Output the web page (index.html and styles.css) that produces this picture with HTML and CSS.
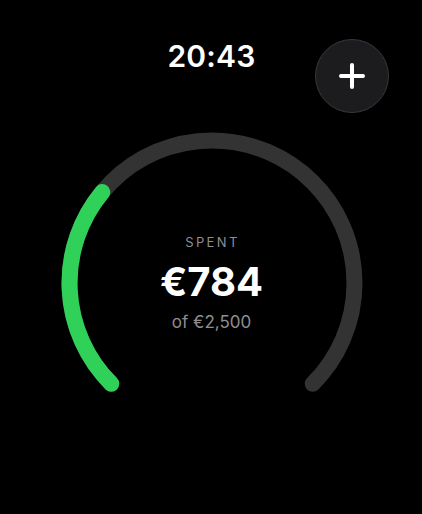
FILE: index.html
```html
<!DOCTYPE html>
<html lang="en">
<head>
<meta charset="utf-8">
<title>Spent</title>
<link rel="stylesheet" href="styles.css">
</head>
<body>
<main class="screen">
  <header class="topbar">
    <div class="time">20:43</div>
    <button class="add-btn" aria-label="Add">
      <svg width="26" height="26" viewBox="0 0 26 26" aria-hidden="true">
        <path d="M13 2 V24 M2 13 H24" stroke="#fff" stroke-width="4" stroke-linecap="round" fill="none"/>
      </svg>
    </button>
  </header>
  <section class="gauge">
    <svg class="gauge-ring" width="320" height="320" viewBox="0 0 320 320" aria-hidden="true">
      <path d="M 59.24 260.76 A 142.5 142.5 0 1 1 260.76 260.76" stroke="#333333" stroke-width="16" stroke-linecap="round" fill="none"/>
      <path d="M 59.24 260.76 A 142.5 142.5 0 0 1 50.3 69.04" stroke="#30d158" stroke-width="16" stroke-linecap="round" fill="none"/>
    </svg>
    <div class="gauge-text">
      <div class="label">SPENT</div>
      <div class="amount">€784</div>
      <div class="total">of €2,500</div>
    </div>
  </section>
</main>
</body>
</html>
```
FILE: styles.css
```css
html, body {
  margin: 0;
  padding: 0;
  background: #000;
}
body {
  font-family: Inter, "Noto Sans", "Liberation Sans", sans-serif;
  color: #fff;
}
.screen {
  width: 422px;
  height: 514px;
  position: relative;
  display: flex;
  flex-direction: column;
  align-items: center;
  overflow: hidden;
}
.topbar {
  width: 100%;
  height: 123px;
  display: flex;
  justify-content: center;
  padding-top: 38px;
  box-sizing: border-box;
}
.time {
  font-size: 30px;
  font-weight: 600;
  line-height: 36px;
  letter-spacing: 0.2px;
  margin-left: 1px;
}
.add-btn {
  position: absolute;
  top: 39px;
  left: 315px;
  width: 74px;
  height: 74px;
  border-radius: 50%;
  background: #1c1c1e;
  border: 1.5px solid #38383a;
  box-sizing: border-box;
  display: flex;
  align-items: center;
  justify-content: center;
  padding: 0;
}
.gauge {
  display: grid;
  width: 320px;
  height: 320px;
  margin-left: 1px;
}
.gauge-ring, .gauge-text {
  grid-area: 1 / 1;
}
.gauge-text {
  display: flex;
  flex-direction: column;
  align-items: center;
  justify-content: flex-start;
  padding-top: 111px;
}
.label {
  font-size: 13px;
  letter-spacing: 2.4px;
  color: #8e8e93;
  line-height: 16px;
  margin-left: 2px;
}
.amount {
  font-size: 40px;
  font-weight: 700;
  line-height: 48px;
  margin-top: 8px;
}
.total {
  font-size: 17px;
  color: #8e8e93;
  line-height: 20px;
  margin-top: 6px;
}
```
